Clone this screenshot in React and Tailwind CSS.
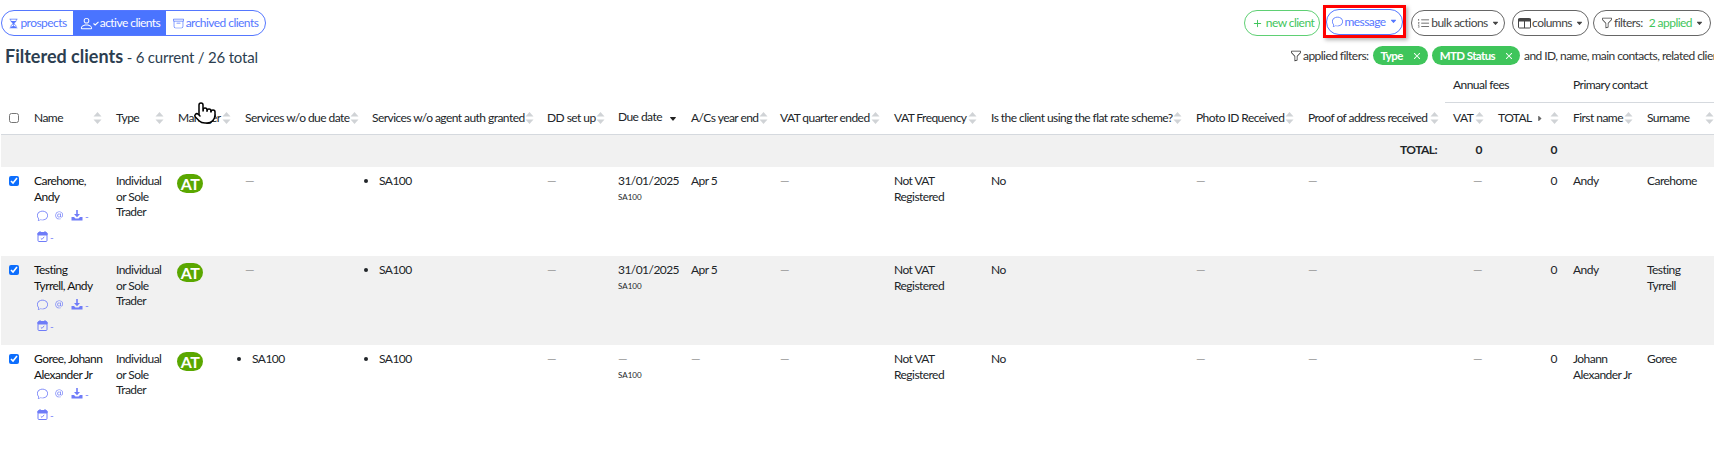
import React from "react";
import { BsHourglassSplit, BsPerson, BsArchive, BsChat, BsAt, BsPlus, BsListOl, BsFunnel, BsX, BsCaretDownFill, BsCaretRightFill } from "react-icons/bs";
import { Pointer } from "lucide-react";

const widths = [25, 82, 62, 67, 127, 175, 71, 73, 89, 114, 97, 205, 112, 145, 45, 75, 74, 81];

function Sort() {
  return (
    <svg width="9" height="14" viewBox="0 0 9 14" className="shrink-0">
      <path d="M4.5 1 L8.5 5.5 H0.5 Z" fill="#d0d3d6" />
      <path d="M0.5 8.5 H8.5 L4.5 13 Z" fill="#d0d3d6" />
    </svg>
  );
}

function DownloadTray() {
  return (
    <svg width="12" height="11" viewBox="0 0 12 11" fill="currentColor">
      <path d="M5.2 0 H6.8 V4 H9 L6 7.2 L3 4 H5.2 Z" />
      <path d="M0.5 7 H3 L4.5 8.5 H7.5 L9 7 H11.5 V10.5 H0.5 Z" />
    </svg>
  );
}

function CalendarIcon() {
  return (
    <svg width="11" height="11" viewBox="0 0 11 11" fill="none" stroke="currentColor">
      <rect x="1" y="1.5" width="9" height="9" rx="1" />
      <path d="M1 2 H10 V4 H1 Z" fill="currentColor" />
      <path d="M3 0 V2 M8 0 V2" />
      <path d="M3.8 7.3 L5 8.4 L7.2 5.8" strokeWidth="0.9" />
    </svg>
  );
}

function ColumnsIcon() {
  return (
    <svg width="13" height="12" viewBox="0 0 13 12" fill="none" stroke="currentColor">
      <rect x="0.5" y="1.5" width="12" height="9.5" rx="1" />
      <path d="M0.5 2 H12.5 V4 H0.5 Z" fill="currentColor" />
      <path d="M6.5 3 V11" />
    </svg>
  );
}

function PersonCheck() {
  return (
    <span className="flex items-center">
      <BsPerson className="w-[15px] h-[15px]" />
      <svg width="6" height="5" viewBox="0 0 6 5" fill="none" stroke="currentColor" strokeWidth="1.1" className="-ml-[1px]">
        <path d="M0.5 2.5 L2.2 4 L5.5 0.8" />
      </svg>
    </span>
  );
}

function Th({ children, extra }) {
  return (
    <th className="border-b border-[#d5d9de] pl-2 pr-[6px] h-[32px] font-normal text-left align-middle">
      <div className="flex items-center justify-between whitespace-nowrap">
        <span>{children}</span>
        {extra}
        <Sort />
      </div>
    </th>
  );
}

const Dash = () => <span className="text-[#999]">—</span>;

function Bullet({ children }) {
  return (
    <ul className="list-disc pl-[7px] m-0">
      <li>{children}</li>
    </ul>
  );
}

function Pill({ icon, children, className }) {
  return (
    <button className={"h-[26px] rounded-full border bg-white flex items-center justify-center gap-[1px] text-[12px] " + className}>
      {icon}
      {children}
    </button>
  );
}

const Caret = () => <BsCaretDownFill className="w-[7px] h-[7px] ml-[3px]" />;

function Row({ nameLines, first, surname, dueServices, dueDate, striped }) {
  return (
    <tr className={(striped ? "bg-[#f1f1f1] " : "") + "h-[89px]"}>
      <td className="pl-2 pt-[9px] align-top">
        <input type="checkbox" defaultChecked className="block w-[10px] h-[10px] m-0 accent-[#0d6efd]" />
      </td>
      <td className="pl-2 pr-1 pt-[6px] align-top text-[#111]">
        {nameLines.map((l) => <div key={l} className="whitespace-nowrap">{l}</div>)}
        <div className="flex items-center gap-[6px] pl-[3px] mt-[6px] text-[#6f7cf8]">
          <BsChat className="w-[11px] h-[11px]" />
          <BsAt className="w-[11px] h-[11px]" />
          <span className="flex items-center gap-[2px]"><DownloadTray /><span className="text-[10px] leading-none">-</span></span>
        </div>
        <div className="flex items-center gap-[2px] pl-[3px] mt-[10px] text-[#6f7cf8]">
          <CalendarIcon />
          <span className="text-[10px] leading-none">-</span>
        </div>
      </td>
      <td className="pl-2 pr-1 pt-[6px] align-top">Individual or Sole Trader</td>
      <td className="pl-[7px] pt-[7px] align-top">
        <span className="flex items-center justify-center w-[26px] h-[19px] rounded-full bg-[#5aa700] text-white font-bold text-[16px] leading-none">AT</span>
      </td>
      <td className="pl-2 pt-[6px] align-top">{dueServices ? <Bullet>SA100</Bullet> : <Dash />}</td>
      <td className="pl-2 pt-[6px] align-top"><Bullet>SA100</Bullet></td>
      <td className="pl-2 pt-[6px] align-top"><Dash /></td>
      <td className="pl-2 pt-[6px] align-top">
        <div>{dueDate || <Dash />}</div>
        <div className="text-[8px] leading-[10px] mt-[3px] tracking-normal">SA100</div>
      </td>
      <td className="pl-2 pt-[6px] align-top">{dueDate ? "Apr 5" : <Dash />}</td>
      <td className="pl-2 pt-[6px] align-top"><Dash /></td>
      <td className="pl-2 pr-1 pt-[6px] align-top">Not VAT Registered</td>
      <td className="pl-2 pt-[6px] align-top">No</td>
      <td className="pl-2 pt-[6px] align-top"><Dash /></td>
      <td className="pl-2 pt-[6px] align-top"><Dash /></td>
      <td className="pr-2 pt-[6px] align-top text-right"><Dash /></td>
      <td className="pr-2 pt-[6px] align-top text-right">0</td>
      <td className="pl-2 pr-1 pt-[6px] align-top">{first}</td>
      <td className="pl-2 pr-[20px] pt-[6px] align-top">{surname}</td>
    </tr>
  );
}

function FilterTag({ children }) {
  return (
    <span className="h-[19px] rounded-full bg-[#3fc55b] text-white font-bold text-[11.5px] flex items-center pl-2 pr-[4px] gap-[7px] tracking-[-0.6px]">
      {children}
      <BsX className="w-[14px] h-[14px]" />
    </span>
  );
}

export default function App() {
  return (
    <div className="relative w-[1714px] h-[452px] overflow-hidden bg-white text-[12px] leading-[15.6px] tracking-[-0.55px] text-[#212529] font-['Lato','Liberation_Sans',sans-serif]">
      <div className="flex justify-between pt-[10px] pl-px pr-[3px] h-[45px]">
        <div className="flex h-[26px] rounded-full border border-[#5577ff] overflow-hidden text-[#5577ff] w-[265px]">
          <span className="flex items-center justify-center gap-[1px] w-[71px]"><BsHourglassSplit className="w-[11px] h-[11px]" />prospects</span>
          <span className="flex items-center justify-center gap-[1px] w-[93px] bg-[#4a74ff] text-white"><PersonCheck />active clients</span>
          <span className="flex items-center justify-center gap-[2px] flex-1"><BsArchive className="w-[11px] h-[11px]" />archived clients</span>
        </div>
        <div className="flex items-start">
          <Pill className="w-[76px] border-[#5fd074] text-[#3fc55b] mr-[3px]" icon={<BsPlus className="w-[15px] h-[15px]" />}>new client</Pill>
          <div className="border-[3px] border-[#f00] -mt-[5px] mr-[5px] shadow-[2px_2px_4px_rgba(0,0,0,0.3)] h-[33px] flex items-center">
            <Pill className="w-[77px] border-[#5577ff] text-[#5577ff]" icon={<BsChat className="w-[11px] h-[11px]" />}>message<Caret /></Pill>
          </div>
          <Pill className="w-[94px] border-[#666] text-[#444] mr-[7px]" icon={<BsListOl className="w-[13px] h-[13px]" />}>bulk actions<Caret /></Pill>
          <Pill className="w-[77px] border-[#666] text-[#444] mr-[4px]" icon={<ColumnsIcon />}>columns<Caret /></Pill>
          <Pill className="w-[118px] border-[#666] text-[#444]" icon={<BsFunnel className="w-[12px] h-[12px]" />}>filters:<span className="text-[#3fc55b] ml-[5px]">2 applied</span><Caret /></Pill>
        </div>
      </div>
      <div className="flex justify-between h-[23px] pl-[5px] items-start">
        <div className="text-[#2c3e50] whitespace-nowrap leading-[22px] tracking-normal">
          <span className="text-[18px] font-bold">Filtered clients</span>
          <span className="text-[15px] tracking-[-0.2px]"> - 6 current / 26 total</span>
        </div>
        <div className="flex items-center gap-[4px] whitespace-nowrap ml-auto w-[424px] shrink-0 overflow-hidden text-[#333] h-[19px] mt-px">
          <span className="flex items-center gap-[1px]"><BsFunnel className="w-[12px] h-[12px]" />applied filters:</span>
          <FilterTag>Type</FilterTag>
          <FilterTag>MTD Status</FilterTag>
          <span>and ID, name, main contacts, related clients</span>
        </div>
      </div>
      <table className="table-fixed border-collapse ml-px w-[1719px] mt-[2px]">
        <colgroup>
          {widths.map((w, i) => <col key={i} style={{ width: w }} />)}
        </colgroup>
        <thead>
          <tr className="h-[32px]">
            <th colSpan={14}></th>
            <th colSpan={2} className="border-b border-[#d5d9de] pl-2 pb-[2px] font-normal text-left">Annual fees</th>
            <th colSpan={2} className="border-b border-[#d5d9de] pl-2 pb-[2px] font-normal text-left">Primary contact</th>
          </tr>
          <tr>
            <th className="border-b border-[#d5d9de] pl-2 align-middle"><input type="checkbox" className="block w-[10px] h-[10px] m-0" /></th>
            <Th>Name</Th>
            <Th>Type</Th>
            <Th>Manager</Th>
            <Th>Services w/o due date</Th>
            <Th>Services w/o agent auth granted</Th>
            <Th>DD set up</Th>
            <th className="border-b border-[#d5d9de] pl-2 pr-[6px] font-normal text-left align-middle">
              <div className="flex items-center justify-between whitespace-nowrap">
                <span className="-mt-[2px]">Due date</span>
                <BsCaretDownFill className="w-[8px] h-[8px] text-[#222] mt-[3px]" />
              </div>
            </th>
            <Th>A/Cs year end</Th>
            <Th>VAT quarter ended</Th>
            <Th>VAT Frequency</Th>
            <Th>Is the client using the flat rate scheme?</Th>
            <Th>Photo ID Received</Th>
            <Th>Proof of address received</Th>
            <Th>VAT</Th>
            <Th extra={<BsCaretRightFill className="w-[7px] h-[7px] text-[#666] ml-auto mr-[7px]" />}>TOTAL</Th>
            <Th>First name</Th>
            <Th>Surname</Th>
          </tr>
        </thead>
        <tbody>
          <tr className="bg-[#f1f1f1] h-[33px] font-bold">
            <td colSpan={14} className="pr-2 pb-[1px] text-right">TOTAL:</td>
            <td className="pr-2 pb-[1px] text-right">0</td>
            <td className="pr-2 pb-[1px] text-right">0</td>
            <td colSpan={2}></td>
          </tr>
          <Row nameLines={["Carehome,", "Andy"]} first="Andy" surname="Carehome" dueDate="31/01/2025" />
          <Row nameLines={["Testing", "Tyrrell, Andy"]} first="Andy" surname="Testing Tyrrell" dueDate="31/01/2025" striped />
          <Row nameLines={["Goree, Johann", "Alexander Jr"]} first="Johann Alexander Jr" surname="Goree" dueServices />
        </tbody>
      </table>
      <Pointer className="absolute left-[193px] top-[100px] w-[24px] h-[26px] text-black" fill="white" strokeWidth={1.5} />
    </div>
  );
}
